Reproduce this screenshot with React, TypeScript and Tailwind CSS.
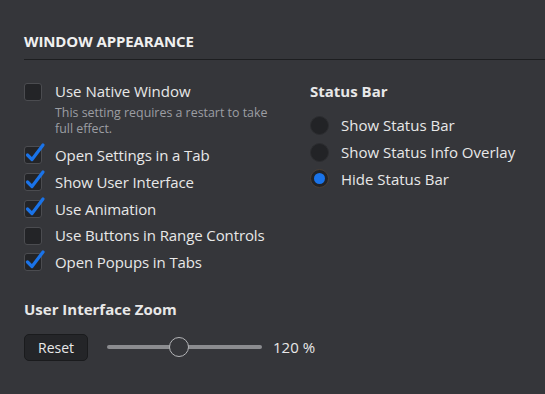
import React, { useState } from 'react';

const font = { fontFamily: '"Open Sans", "Noto Sans", sans-serif' };

const Checkbox: React.FC<{ checked: boolean }> = ({ checked }) => (
    <div className="relative w-[18px] h-[18px] shrink-0 rounded-[3px] border border-[#4b4c50] bg-[#232427]">
        {checked && (
            <svg className="absolute -left-[1px] -top-[5px] overflow-visible" width="22" height="22" viewBox="0 0 22 22">
                <path d="M3.5 13 L8 17.5 L19 3" fill="none" stroke="#1a73e8" strokeWidth="3.2" strokeLinecap="round" strokeLinejoin="round" />
            </svg>
        )}
    </div>
);

const Radio: React.FC<{ checked: boolean }> = ({ checked }) => (
    <div className={`w-[19px] h-[19px] shrink-0 rounded-full flex items-center justify-center bg-[#222326] border ${checked ? 'border-[#4a3f36]' : 'border-[#2c2d30]'}`}>
        {checked && <div className="w-[11px] h-[11px] rounded-full bg-[#1a73e8]" />}
    </div>
);

const checkRows = [
    { label: 'Open Settings in a Tab', checked: true },
    { label: 'Show User Interface', checked: true },
    { label: 'Use Animation', checked: true },
    { label: 'Use Buttons in Range Controls', checked: false },
    { label: 'Open Popups in Tabs', checked: true },
];

const radioRows = ['Show Status Bar', 'Show Status Info Overlay', 'Hide Status Bar'];

const App: React.FC = () => {
    const [zoom] = useState(120);

    return (
        <div className="w-[545px] h-[394px] bg-[#35363a] text-[#e8e8e8] overflow-hidden" style={font}>
            <div className="pl-6 pt-[30px]">
                <h2 className="text-[15px] font-bold leading-[22px] tracking-[-0.1px] text-[#f0f0f0]">WINDOW APPEARANCE</h2>
                <div className="mt-[7px] h-px bg-[#1d1e20]" />

                <div className="grid grid-cols-[286px_1fr] mt-[18px]">
                    <div className="flex flex-col">
                        <div className="flex items-center gap-[13px] h-[27px]">
                            <Checkbox checked={false} />
                            <span className="text-[15px]">Use Native Window</span>
                        </div>
                        <p className="pl-[31px] text-[12.4px] leading-[16px] text-[#9c9ea3] w-[250px]">
                            This setting requires a restart to take full effect.
                        </p>
                        <div className="mt-[5px] flex flex-col">
                            {checkRows.map(row => (
                                <div key={row.label} className="flex items-center gap-[13px] h-[26.75px]">
                                    <Checkbox checked={row.checked} />
                                    <span className="text-[15px] tracking-[-0.1px]">{row.label}</span>
                                </div>
                            ))}
                        </div>
                    </div>

                    <div className="flex flex-col">
                        <div className="h-[27px] flex items-center text-[15px] font-bold">Status Bar</div>
                        <div className="mt-[7px] flex flex-col">
                            {radioRows.map((label, i) => (
                                <div key={label} className="flex items-center gap-[12px] h-[26.75px]">
                                    <Radio checked={i === 2} />
                                    <span className="text-[15px]">{label}</span>
                                </div>
                            ))}
                        </div>
                    </div>
                </div>

                <h3 className="mt-[23px] text-[15px] font-bold leading-[20px]">User Interface Zoom</h3>
                <div className="mt-[15px] flex items-center">
                    <button className="w-16 h-[27px] rounded-[5px] bg-[#242528] border border-[#1a1b1d] text-[14px] text-[#e8e8e8]">
                        Reset
                    </button>
                    <div className="relative ml-[19px] w-[155px] h-5 flex items-center">
                        <div className="w-full h-1 rounded-full bg-[#8b8c8f]" />
                        <div className="absolute left-[62px] top-0 w-5 h-5 rounded-full bg-[#35363a] border-[1.5px] border-[#b4b5b8]" />
                    </div>
                    <span className="ml-[11px] text-[15px]">{zoom} %</span>
                </div>
            </div>
        </div>
    );
};

export default App;
